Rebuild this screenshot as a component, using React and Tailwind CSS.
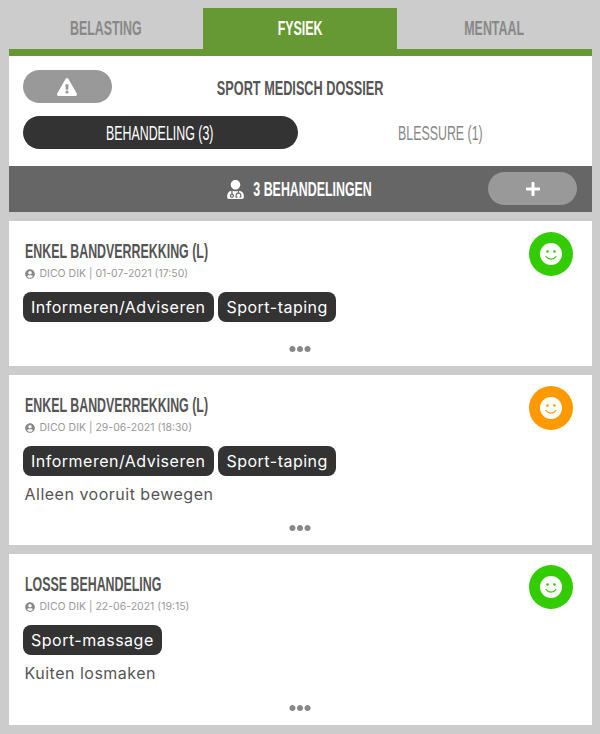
import { FaExclamationTriangle, FaUserMd, FaPlus, FaUserCircle, FaEllipsisH } from 'react-icons/fa';

const behandelingen = [
  { title: 'ENKEL BANDVERREKKING (L)', meta: 'DICO DIK | 01-07-2021 (17:50)', tags: ['Informeren/Adviseren', 'Sport-taping'], color: 'bg-[#33cc00] text-[#33cc00]', height: 'h-[145px]' },
  { title: 'ENKEL BANDVERREKKING (L)', meta: 'DICO DIK | 29-06-2021 (18:30)', tags: ['Informeren/Adviseren', 'Sport-taping'], note: 'Alleen vooruit bewegen', color: 'bg-[#ff9900] text-[#ff9900]', height: 'h-[170px]' },
  { title: 'LOSSE BEHANDELING', meta: 'DICO DIK | 22-06-2021 (19:15)', tags: ['Sport-massage'], note: 'Kuiten losmaken', color: 'bg-[#33cc00] text-[#33cc00]', height: 'h-[171px]' },
];

const narrow = "font-['Liberation_Sans',sans-serif] text-[20px]";
const wide = "font-['Inter',sans-serif]";

// the heading font is a condensed one, so squeeze Liberation Sans around its centre
function Squeezed({ className = 'scale-x-[0.62]', children }) {
  return <span className={`inline-block shrink-0 whitespace-nowrap ${className}`}>{children}</span>;
}

function Smiley() {
  return (
    <svg width="22" height="22" viewBox="0 0 22 22">
      <circle cx="11" cy="11" r="11" fill="#fff" />
      <circle cx="7.5" cy="8.5" r="1.3" fill="currentColor" />
      <circle cx="14.5" cy="8.5" r="1.3" fill="currentColor" />
      <path d="M6 13.5c1.2 1.8 3 2.6 5 2.6s3.800-.8 5-2.600" fill="none" stroke="currentColor" strokeWidth="1.200" strokeLinecap="round" />
    </svg>
  );
}

function Card({ item }) {
  return (
    <div className={`relative bg-white px-[14px] pt-[20px] ${item.height}`}>
      <div className={`${narrow} pl-[2px] leading-[20px] font-bold text-[#555]`}>
        <Squeezed className="origin-left scale-x-[0.62]">{item.title}</Squeezed>
      </div>
      <div className={`flex items-center gap-[5px] pl-[2px] mt-[6px] text-[10.5px] leading-[14px] text-[#999] ${wide}`}>
        <FaUserCircle className="text-[10px] text-[#888]" />
        <span>{item.meta}</span>
      </div>
      <div className="flex gap-[4px] mt-[11px]">
        {item.tags.map((tag, i) => (
          <span key={i} className={`bg-[#333] text-white rounded-[8px] px-[8.5px] h-[30px] flex items-center text-[16px] tracking-[0.5px] ${wide}`}>{tag}</span>
        ))}
      </div>
      {item.note && <div className={`pl-[2px] mt-[8px] text-[16px] leading-[20px] tracking-[0.5px] text-[#555] ${wide}`}>{item.note}</div>}
      <div className={`absolute right-[19px] top-[11px] w-[44px] h-[44px] rounded-full flex items-center justify-center ${item.color}`}>
        <Smiley />
      </div>
      <div className="absolute bottom-[6px] left-0 right-0 flex justify-center">
        <FaEllipsisH className="text-[22px] text-[#888]" />
      </div>
    </div>
  );
}

export default function App() {
  return (
    <div className="min-h-[734px] bg-[#ccc] px-[8.5px] pt-[8px]">
      <div className={`grid grid-cols-3 h-[41px] font-bold ${narrow}`}>
        <div className="flex items-center justify-center text-[#888] pb-[2px]"><Squeezed>BELASTING</Squeezed></div>
        <div className="flex items-center justify-center bg-[#669933] text-white pb-[2px]"><Squeezed>FYSIEK</Squeezed></div>
        <div className="flex items-center justify-center text-[#888] pb-[2px]"><Squeezed>MENTAAL</Squeezed></div>
      </div>
      <div className="h-[7px] bg-[#669933]" />
      <div className="bg-white h-[110px] px-[14px] pt-[14px]">
        <div className="flex items-center h-[33px]">
          <button className="w-[89px] h-[33px] rounded-full bg-[#999] flex items-center justify-center text-white">
            <FaExclamationTriangle className="text-[20px]" />
          </button>
          <div className={`flex-1 flex justify-center pr-[89px] pt-[2px] font-bold text-[#555] ${narrow}`}>
            <Squeezed className="scale-x-[0.635]">SPORT MEDISCH DOSSIER</Squeezed>
          </div>
        </div>
        <div className={`flex mt-[13px] ${narrow}`}>
          <div className="w-[275px] h-[33px] rounded-full bg-[#333] text-white flex items-center justify-center"><Squeezed>BEHANDELING (3)</Squeezed></div>
          <div className="flex-1 h-[33px] pl-[5px] flex items-center justify-center text-[#888]"><Squeezed>BLESSURE (1)</Squeezed></div>
        </div>
      </div>
      <div className={`relative h-[46px] bg-[#666] flex items-center justify-center gap-[8px] pr-[2px] text-white font-bold ${narrow}`}>
        <FaUserMd className="text-[19px]" />
        <div className="w-[120px] flex justify-center"><Squeezed>3 BEHANDELINGEN</Squeezed></div>
        <button className="absolute right-[14.5px] top-[6px] w-[89px] h-[33px] rounded-full bg-[#999] flex items-center justify-center">
          <FaPlus className="text-[16px]" />
        </button>
      </div>
      <div className="flex flex-col gap-[9px] mt-[9px]">
        {behandelingen.map((item, i) => <Card key={i} item={item} />)}
      </div>
    </div>
  );
}
